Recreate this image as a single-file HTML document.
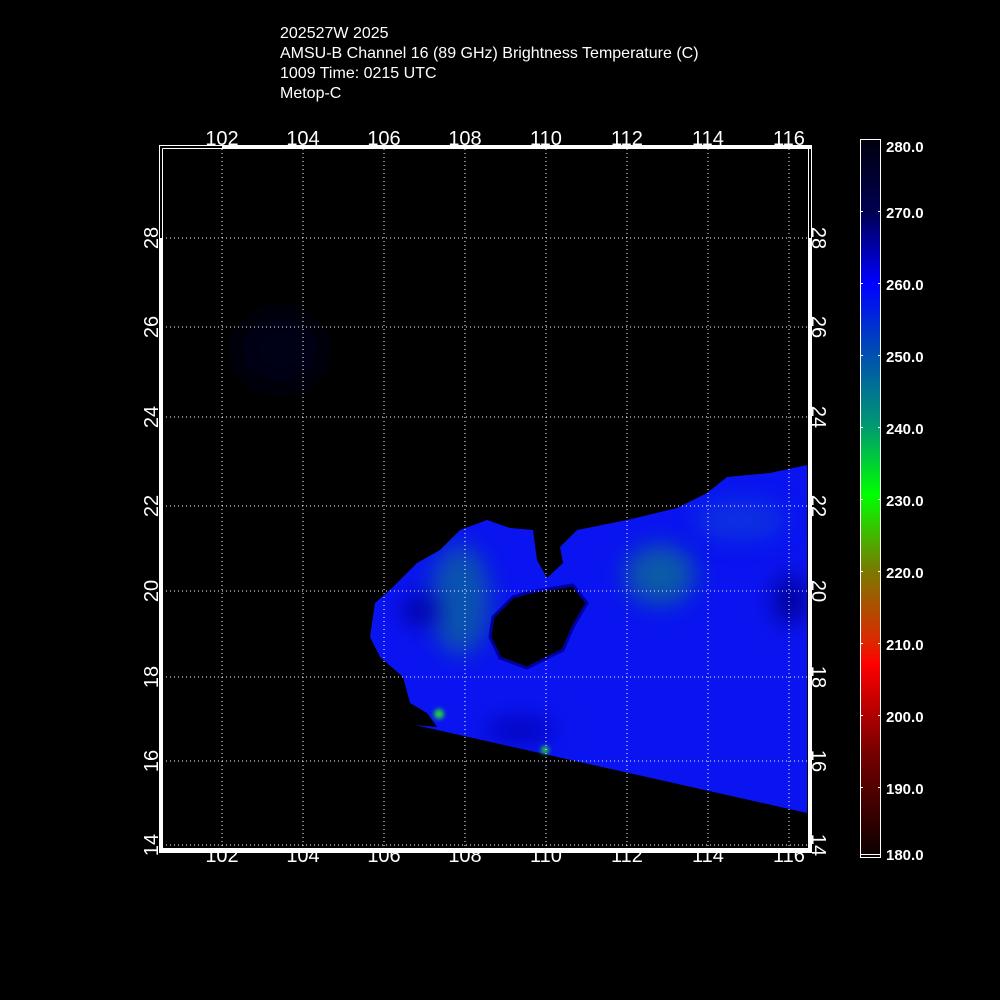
<!DOCTYPE html>
<html><head><meta charset="utf-8"><style>
html,body{margin:0;padding:0;background:#000;}
body{width:1000px;height:1000px;position:relative;overflow:hidden;font-family:"Liberation Sans",sans-serif;color:#fff;}
.t{position:absolute;left:280px;font-size:16px;line-height:20px;}
</style></head><body>
<div class="t" style="top:24px">202527W 2025<br>AMSU-B Channel 16 (89 GHz) Brightness Temperature (C)<br>1009 Time: 0215 UTC<br>Metop-C</div>
<svg width="1000" height="1000" style="position:absolute;left:0;top:0">
<defs>
<linearGradient id="cb" x1="0" y1="0" x2="0" y2="1">
<stop offset="0" stop-color="#00000e"/>
<stop offset="0.1" stop-color="#000050"/>
<stop offset="0.2" stop-color="#0000ff"/>
<stop offset="0.3" stop-color="#0050b0"/>
<stop offset="0.4" stop-color="#009a70"/>
<stop offset="0.495" stop-color="#00ff00"/>
<stop offset="0.6" stop-color="#7a7a00"/>
<stop offset="0.7" stop-color="#dd2800"/>
<stop offset="0.73" stop-color="#ff0000"/>
<stop offset="0.85" stop-color="#7a0000"/>
<stop offset="1" stop-color="#0a0000"/>
</linearGradient>
<filter id="bl" x="-100%" y="-100%" width="300%" height="300%"><feGaussianBlur stdDeviation="12"/></filter>
<filter id="bl2" x="-100%" y="-100%" width="300%" height="300%"><feGaussianBlur stdDeviation="2"/></filter>
<clipPath id="cp"><path d="M415,725 L807,813 L807,465 L770,473 L727,477 L707,493 L677,508 L627,520 L577,530 L560,547 L563,563 L547,578 L537,560 L533,530 L510,528 L487,520 L460,530 L440,550 L417,563 L393,587 L375,603 L370,637 L380,657 L403,677 L410,703 L427,713 L437,727 Z"/></clipPath>
</defs>
<ellipse cx="280" cy="350" rx="45" ry="40" fill="#000018" filter="url(#bl)"/>
<g clip-path="url(#cp)">
<rect x="360" y="460" width="460" height="360" fill="#0a14f0"/>
<ellipse cx="460" cy="600" rx="30" ry="55" fill="#10a060" opacity="0.45" filter="url(#bl)"/>
<ellipse cx="660" cy="575" rx="35" ry="30" fill="#10a060" opacity="0.5" filter="url(#bl)"/>
<ellipse cx="420" cy="610" rx="18" ry="15" fill="#0000a0" filter="url(#bl)"/>
<ellipse cx="790" cy="600" rx="15" ry="25" fill="#000090" filter="url(#bl)"/>
<ellipse cx="520" cy="730" rx="35" ry="10" fill="#0000b0" filter="url(#bl)"/>
<ellipse cx="740" cy="520" rx="45" ry="20" fill="#1050d0" opacity="0.5" filter="url(#bl)"/>
</g>
<path d="M493,617 L513,597 L530,592 L573,585 L587,603 L573,627 L563,650 L543,660 L527,668 L500,658 L490,637 Z" fill="#000" stroke="#0000a0" stroke-width="3"/>
<circle cx="439" cy="714" r="5" fill="#20d040" filter="url(#bl2)"/>
<circle cx="545" cy="750" r="4" fill="#20c040" filter="url(#bl2)"/>
<g stroke="#fff" stroke-width="1" stroke-dasharray="1,3">
<line x1="222" y1="149" x2="222" y2="848"/><line x1="303" y1="149" x2="303" y2="848"/><line x1="384" y1="149" x2="384" y2="848"/><line x1="465" y1="149" x2="465" y2="848"/><line x1="546" y1="149" x2="546" y2="848"/><line x1="627" y1="149" x2="627" y2="848"/><line x1="708" y1="149" x2="708" y2="848"/><line x1="789" y1="149" x2="789" y2="848"/>
<line x1="162" y1="238" x2="808" y2="238"/><line x1="162" y1="327" x2="808" y2="327"/><line x1="162" y1="417" x2="808" y2="417"/><line x1="162" y1="506" x2="808" y2="506"/><line x1="162" y1="591" x2="808" y2="591"/><line x1="162" y1="677" x2="808" y2="677"/><line x1="162" y1="761" x2="808" y2="761"/><line x1="162" y1="845" x2="808" y2="845"/>
</g>
<rect x="159.5" y="145.5" width="652" height="707" fill="none" stroke="#fff"/>
<rect x="222" y="146" width="589" height="3" fill="#fff"/>
<rect x="160" y="238" width="3" height="614" fill="#fff"/>
<rect x="160" y="848" width="651" height="4" fill="#fff"/>
<rect x="808" y="238" width="3" height="614" fill="#fff"/>
<line x1="162.5" y1="148.5" x2="808.5" y2="148.5" stroke="#fff"/>
<line x1="162.5" y1="148.5" x2="162.5" y2="848" stroke="#fff"/>
<line x1="808.5" y1="148.5" x2="808.5" y2="848" stroke="#fff"/>
<g fill="#fff" font-family="Liberation Sans,sans-serif" font-size="20" text-anchor="middle">
<text x="222" y="145">102</text><text x="303" y="145">104</text><text x="384" y="145">106</text><text x="465" y="145">108</text><text x="546" y="145">110</text><text x="627" y="145">112</text><text x="708" y="145">114</text><text x="789" y="145">116</text>
<text x="222" y="862">102</text><text x="303" y="862">104</text><text x="384" y="862">106</text><text x="465" y="862">108</text><text x="546" y="862">110</text><text x="627" y="862">112</text><text x="708" y="862">114</text><text x="789" y="862">116</text>
<g transform="translate(158,238) rotate(-90)"><text>28</text></g>
<g transform="translate(158,327) rotate(-90)"><text>26</text></g>
<g transform="translate(158,417) rotate(-90)"><text>24</text></g>
<g transform="translate(158,506) rotate(-90)"><text>22</text></g>
<g transform="translate(158,591) rotate(-90)"><text>20</text></g>
<g transform="translate(158,677) rotate(-90)"><text>18</text></g>
<g transform="translate(158,761) rotate(-90)"><text>16</text></g>
<g transform="translate(158,845) rotate(-90)"><text>14</text></g>
<g transform="translate(812,238) rotate(90)"><text>28</text></g>
<g transform="translate(812,327) rotate(90)"><text>26</text></g>
<g transform="translate(812,417) rotate(90)"><text>24</text></g>
<g transform="translate(812,506) rotate(90)"><text>22</text></g>
<g transform="translate(812,591) rotate(90)"><text>20</text></g>
<g transform="translate(812,677) rotate(90)"><text>18</text></g>
<g transform="translate(812,761) rotate(90)"><text>16</text></g>
<g transform="translate(812,845) rotate(90)"><text>14</text></g>
</g>
<rect x="860.5" y="139.5" width="20" height="718" fill="url(#cb)" stroke="#fff"/>
<line x1="861" y1="854.5" x2="880" y2="854.5" stroke="#fff"/>
<g stroke="#fff">
<path d="M861,211.5h2M878,211.5h2M861,283.5h2M878,283.5h2M861,355.5h2M878,355.5h2M861,427.5h2M878,427.5h2M861,499.5h2M878,499.5h2M861,571.5h2M878,571.5h2M861,643.5h2M878,643.5h2M861,715.5h2M878,715.5h2M861,787.5h2M878,787.5h2"/>
</g>
<g fill="#fff" font-family="Liberation Sans,sans-serif" font-size="15" font-weight="bold">
<text x="886" y="152">280.0</text><text x="886" y="218">270.0</text><text x="886" y="290">260.0</text><text x="886" y="362">250.0</text><text x="886" y="434">240.0</text><text x="886" y="506">230.0</text><text x="886" y="578">220.0</text><text x="886" y="650">210.0</text><text x="886" y="722">200.0</text><text x="886" y="794">190.0</text><text x="886" y="860">180.0</text>
</g>
</svg>
</body></html>
